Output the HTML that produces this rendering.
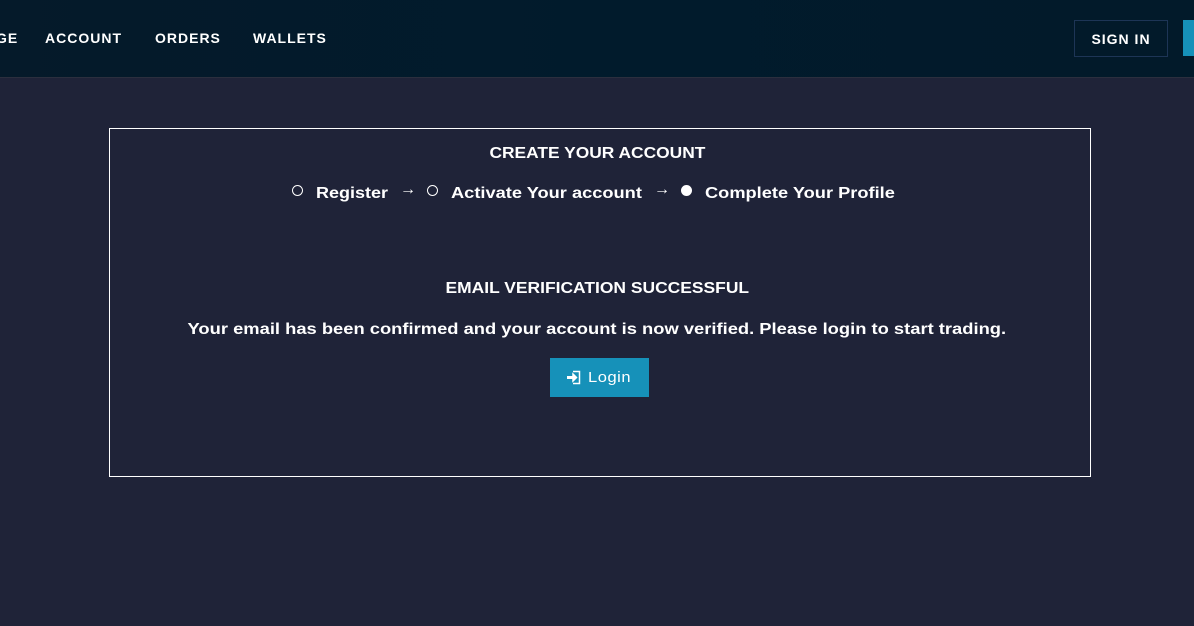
<!DOCTYPE html>
<html><head><style>
*{margin:0;padding:0;box-sizing:border-box}
body{width:1194px;height:626px;background:#1f2338;font-family:"Liberation Sans",sans-serif;color:#fff;overflow:hidden;position:relative}
.hdr{position:absolute;left:0;top:0;width:1194px;height:78px;background:linear-gradient(90deg,#051a2a,#011b2c 50%,#021a2a);border-bottom:1px solid #2b2f3e}
.nav{position:absolute;top:30px;font-size:14px;font-weight:bold;letter-spacing:1px}
.signin{position:absolute;left:1074px;top:20px;width:94px;height:37px;border:1px solid #1d3556;font-size:14px;font-weight:bold;letter-spacing:1px;text-align:center;line-height:36px}
.blue{position:absolute;left:1183px;top:20px;width:11px;height:36px;background:#1691b9}
.box{position:absolute;left:109px;top:128px;width:982px;height:349px;border:1px solid #fff}
.t{position:absolute;left:0;width:100%;text-align:center;font-weight:bold}
.t span{display:inline-block}
.steps{position:absolute;top:185px;font-size:16px;font-weight:bold;transform-origin:0 0;white-space:nowrap}
.circ{position:absolute;width:11px;height:11px;border:1.5px solid #fff;border-radius:50%}
.btn{position:absolute;left:550px;top:358px;width:99px;height:39px;background:#1691b9;font-size:15px;letter-spacing:.5px}
</style></head><body>
<div class="hdr">
<span class="nav" style="left:-4px">GE</span>
<span class="nav" style="left:45px">ACCOUNT</span>
<span class="nav" style="left:155px">ORDERS</span>
<span class="nav" style="left:253px">WALLETS</span>
<div class="signin">SIGN IN</div>
<div class="blue"></div>
</div>
<div class="t" style="top:145px;font-size:16px"><span style="transform:scaleX(1.086)">CREATE YOUR ACCOUNT</span></div>
<div class="circ" style="left:292px;top:185px"></div>
<span class="steps" style="left:316px;transform:scaleX(1.125)">Register</span>
<span class="steps" style="left:400px;font-size:16px;top:181px">→</span>
<div class="circ" style="left:427px;top:185px"></div>
<span class="steps" style="left:451px;transform:scaleX(1.14)">Activate Your account</span>
<span class="steps" style="left:654px;font-size:16px;top:181px">→</span>
<div class="circ" style="left:681px;top:185px;background:#fff"></div>
<span class="steps" style="left:705px;transform:scaleX(1.14)">Complete Your Profile</span>
<div class="t" style="top:280px;font-size:16px"><span style="transform:scaleX(1.09)">EMAIL VERIFICATION SUCCESSFUL</span></div>
<div class="t" style="top:321px;font-size:16px"><span style="transform:scaleX(1.147)">Your email has been confirmed and your account is now verified. Please login to start trading.</span></div>
<div class="btn">
<svg style="position:absolute;left:16px;top:12px" width="16" height="15" viewBox="0 0 16 15" fill="none" stroke="#fff" stroke-width="1.5"><path d="M7 1.5h6.5v12H7"/><path d="M1 7.5h7" stroke-width="3"/><path d="M7 4l3.5 3.5L7 11z" fill="#fff"/></svg>
<span style="position:absolute;left:38px;top:11px;display:inline-block;transform:scaleX(1.1);transform-origin:0 0">Login</span>
</div>
<div class="box"></div>
</body></html>
